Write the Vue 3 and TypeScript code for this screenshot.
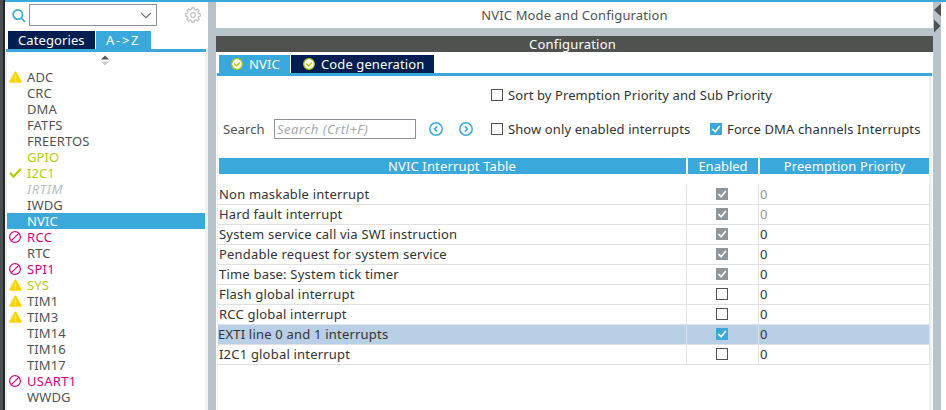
<script setup lang="ts">
type Status = 'warn' | 'ok' | 'blocked' | ''
interface Peripheral {
  name: string
  status: Status
  tone: '' | 'green' | 'pink' | 'muted' | 'selected'
}
interface Interrupt {
  name: string
  enabled: boolean
  locked: boolean
  fixedPriority: boolean
  selected?: boolean
}

const peripherals: Peripheral[] = [
  { name: 'ADC', status: 'warn', tone: '' },
  { name: 'CRC', status: '', tone: '' },
  { name: 'DMA', status: '', tone: '' },
  { name: 'FATFS', status: '', tone: '' },
  { name: 'FREERTOS', status: '', tone: '' },
  { name: 'GPIO', status: '', tone: 'green' },
  { name: 'I2C1', status: 'ok', tone: 'green' },
  { name: 'IRTIM', status: '', tone: 'muted' },
  { name: 'IWDG', status: '', tone: '' },
  { name: 'NVIC', status: '', tone: 'selected' },
  { name: 'RCC', status: 'blocked', tone: 'pink' },
  { name: 'RTC', status: '', tone: '' },
  { name: 'SPI1', status: 'blocked', tone: 'pink' },
  { name: 'SYS', status: 'warn', tone: 'green' },
  { name: 'TIM1', status: 'warn', tone: '' },
  { name: 'TIM3', status: 'warn', tone: '' },
  { name: 'TIM14', status: '', tone: '' },
  { name: 'TIM16', status: '', tone: '' },
  { name: 'TIM17', status: '', tone: '' },
  { name: 'USART1', status: 'blocked', tone: 'pink' },
  { name: 'WWDG', status: '', tone: '' },
]

const interrupts: Interrupt[] = [
  { name: 'Non maskable interrupt', enabled: true, locked: true, fixedPriority: true },
  { name: 'Hard fault interrupt', enabled: true, locked: true, fixedPriority: true },
  { name: 'System service call via SWI instruction', enabled: true, locked: true, fixedPriority: false },
  { name: 'Pendable request for system service', enabled: true, locked: true, fixedPriority: false },
  { name: 'Time base: System tick timer', enabled: true, locked: true, fixedPriority: false },
  { name: 'Flash global interrupt', enabled: false, locked: false, fixedPriority: false },
  { name: 'RCC global interrupt', enabled: false, locked: false, fixedPriority: false },
  { name: 'EXTI line 0 and 1 interrupts', enabled: true, locked: false, fixedPriority: false, selected: true },
  { name: 'I2C1 global interrupt', enabled: false, locked: false, fixedPriority: false },
]
</script>

<template>
  <div class="window">
    <div class="frame-edge"></div>
    <div class="workspace">
      <aside class="sidebar">
        <div class="finder">
          <svg class="magnifier" viewBox="0 0 14 14">
            <circle cx="5.8" cy="5.6" r="4.7" />
            <path d="M9.2 9 L13 12.9" />
          </svg>
          <div class="combo">
            <svg class="chevron" viewBox="0 0 12 7"><path d="M1 1 L6 5.6 L11 1" /></svg>
          </div>
          <svg class="gear" viewBox="-8 -8 16 16">
            <path
              d="M-1.1 -7.3 H1.1 L1.5 -5.5 L3 -4.9 L4.5 -6 L6 -4.5 L4.9 -3 L5.5 -1.5 L7.3 -1.1 V1.1 L5.5 1.5 L4.9 3 L6 4.5 L4.5 6 L3 4.9 L1.5 5.5 L1.1 7.3 H-1.1 L-1.5 5.5 L-3 4.9 L-4.5 6 L-6 4.5 L-4.9 3 L-5.5 1.5 L-7.3 1.1 V-1.1 L-5.5 -1.5 L-4.9 -3 L-6 -4.5 L-4.5 -6 L-3 -4.9 L-1.5 -5.5 Z"
            />
            <circle r="2.4" />
          </svg>
        </div>
        <div class="side-tabs">
          <div class="tab dark categories">Categories</div>
          <div class="tab az">A-&gt;Z</div>
        </div>
        <div class="side-rule"></div>
        <div class="side-body">
          <div class="sorter">
            <svg viewBox="0 0 8 11">
              <path class="up" d="M0 4.6 L4 0.6 L8 4.6 Z" />
              <path class="down" d="M0 6.4 L4 10.4 L8 6.4 Z" />
            </svg>
          </div>
          <ul class="list">
            <li v-for="p in peripherals" :key="p.name" :class="p.tone">
              <span class="mark">
                <svg v-if="p.status === 'warn'" viewBox="0 0 13 12">
                  <path class="warn" d="M6.5 1.2 L12.1 10.9 H0.9 Z" />
                  <path class="bang" d="M6.5 4.4 V8 M6.5 8.9 V10" />
                </svg>
                <svg v-else-if="p.status === 'ok'" viewBox="0 0 13 12">
                  <path class="tick" d="M1 5.9 L4.6 9.5 L11.8 1.8" />
                </svg>
                <svg v-else-if="p.status === 'blocked'" viewBox="0 0 13 12">
                  <circle class="ban" cx="6" cy="6" r="5.4" />
                  <path class="ban" d="M2.4 9.6 L9.7 2.4" />
                </svg>
              </span>
              <span class="pname">{{ p.name }}</span>
            </li>
          </ul>
        </div>
      </aside>

      <main class="main">
        <div class="mode-title">NVIC Mode and Configuration</div>
        <div class="config-title">Configuration</div>
        <section class="config">
          <div class="tabs">
            <div class="tab nvic">
              <svg class="badge" viewBox="0 0 12 12">
                <circle cx="6" cy="6" r="5.3" />
                <path d="M3.3 5.6 L5.5 7.9 L8.9 4.4" />
              </svg>
              <span>NVIC</span>
            </div>
            <div class="tab dark codegen">
              <svg class="badge" viewBox="0 0 12 12">
                <circle cx="6" cy="6" r="5.3" />
                <path d="M3.3 5.6 L5.5 7.9 L8.9 4.4" />
              </svg>
              <span>Code generation</span>
            </div>
          </div>
          <div class="rule"></div>
          <div class="pane">
            <div class="options">
              <div class="search-label">Search</div>
              <div class="search-box">Search (Crtl+F)</div>
              <svg class="nav prev" viewBox="0 0 14 14">
                <circle cx="7" cy="7" r="6.2" />
                <path d="M8.2 4.4 L5.5 7 L8.2 9.6" />
              </svg>
              <svg class="nav next" viewBox="0 0 14 14">
                <circle cx="7" cy="7" r="6.2" />
                <path d="M5.8 4.4 L8.5 7 L5.8 9.6" />
              </svg>
              <div class="option sort">
                <span class="box"></span><span>Sort by Premption Priority and Sub Priority</span>
              </div>
              <div class="option only">
                <span class="box"></span><span>Show only enabled interrupts</span>
              </div>
              <div class="option force">
                <span class="box on"><svg viewBox="0 0 12 12"><path d="M2.3 6 L5.2 8.8 L9.8 2.9" /></svg></span>
                <span>Force DMA channels Interrupts</span>
              </div>
            </div>
            <div class="thead">
              <div class="th-name">NVIC Interrupt Table</div>
              <div class="th-enabled">Enabled</div>
              <div>Preemption Priority</div>
            </div>
            <div class="tbody">
              <div v-for="i in interrupts" :key="i.name" class="row" :class="{ picked: i.selected }">
                <div class="cell name">{{ i.name }}</div>
                <div class="cell enabled">
                  <span class="box" :class="{ on: i.enabled, locked: i.locked }">
                    <svg v-if="i.enabled" viewBox="0 0 12 12"><path d="M2.3 6 L5.2 8.8 L9.8 2.9" /></svg>
                  </span>
                </div>
                <div class="cell prio" :class="{ fixed: i.fixedPriority }">0</div>
              </div>
            </div>
          </div>
        </section>
      </main>

      <div class="splitter">
        <svg viewBox="0 0 8 32">
          <path d="M8 1.5 V14.5 L1 8 Z" />
          <path d="M1 17.5 V30.5 L7.5 24 Z" />
        </svg>
      </div>
    </div>
  </div>
</template>

<style>
body {
  background: #fff;
  overflow: hidden;
}
</style>

<style scoped>
* {
  box-sizing: border-box;
}
svg {
  display: block;
  fill: none;
}
.window {
  display: flex;
  width: 946px;
  height: 410px;
  overflow: hidden;
  font-family: 'Noto Sans', 'Open Sans', sans-serif;
  font-size: 13px;
  line-height: 16px;
  letter-spacing: 0.1px;
  color: #333;
  white-space: nowrap;
}
.frame-edge {
  width: 5px;
  background: #4b5052;
  border-right: 2px solid #242526;
}
.workspace {
  flex: 1;
  display: flex;
  border-top: 2px solid #3ba8db;
  padding-right: 5px;
}
.sidebar {
  width: 203px;
  display: flex;
  flex-direction: column;
}
.finder {
  display: flex;
  height: 29px;
  padding: 2px 7px 0;
}
.magnifier {
  width: 14px;
  height: 14px;
  margin: 5px 3px 0 0;
  stroke: #3ba8db;
  stroke-width: 1.7;
}
.combo {
  width: 128px;
  height: 22px;
  border: 1px solid #8c9296;
  display: flex;
  justify-content: flex-end;
  padding: 7px 4px 0 0;
}
.chevron {
  width: 12px;
  height: 7px;
  stroke: #6c7275;
  stroke-width: 1.2;
}
.gear {
  width: 16px;
  height: 16px;
  margin: 3px 0 0 28px;
  stroke: #c5c8ca;
  stroke-width: 1.4;
}
.side-tabs,
.tabs {
  display: flex;
  gap: 1px;
  height: 18px;
}
.side-tabs {
  padding-left: 3px;
}
.tab {
  display: flex;
  align-items: center;
  height: 18px;
  background: #3ba8db;
  color: #fff;
}
.tab.dark {
  background: #001f50;
}
.side-tabs .tab {
  padding-bottom: 1px;
}
.categories {
  width: 87px;
  padding-left: 10px;
}
.az {
  width: 55px;
  padding-left: 10px;
  letter-spacing: 1.7px;
}
.side-rule {
  height: 3px;
  margin: 0 2px 0 1px;
  background: #3ba8db;
}
.side-body {
  flex: 1;
  border-left: 2px solid #f0f2f2;
  border-right: 3px solid #f0f2f2;
}
.sorter {
  height: 17px;
  padding: 3px 0 0 94px;
}
.sorter svg {
  width: 8px;
  height: 11px;
}
.up {
  fill: #555;
}
.down {
  fill: #c8cbcd;
}
.list {
  margin: 0;
  padding: 0;
  list-style: none;
}
.list li {
  display: flex;
  height: 16px;
  color: #505354;
  letter-spacing: 0.1px;
}
.list .green {
  color: #b4cc0a;
}
.list .pink {
  color: #d6007f;
  letter-spacing: 0.3px;
}
.list .muted {
  color: #b5c0c7;
  font-style: italic;
  letter-spacing: 0.5px;
}
.list .selected {
  background: #3ba8db;
  color: #fff;
}
.mark {
  width: 20px;
  padding: 2px 0 0 2px;
}
.mark svg {
  width: 13px;
  height: 12px;
}
.warn {
  fill: #ffd200;
  stroke: #ffd200;
  stroke-width: 1.6;
  stroke-linejoin: round;
}
.bang {
  stroke: #fff;
  stroke-width: 1.2;
}
.tick {
  stroke: #b4cc0a;
  stroke-width: 2.3;
}
.ban {
  stroke: #d6007f;
  stroke-width: 1.2;
}
.main {
  width: 733px;
  border-left: 8px solid #b9c4ca;
  border-right: 8px solid #b9c4ca;
  margin-right: -8px;
  display: flex;
  flex-direction: column;
}
.mode-title {
  height: 34px;
  border-bottom: 8px solid #b9c4ca;
  padding-top: 5px;
  text-align: center;
  color: #505354;
  letter-spacing: 0.12px;
}
.config-title {
  height: 16px;
  background: #50524f;
  color: #fff;
  text-align: center;
  padding-right: 4px;
  letter-spacing: 0.2px;
}
.config {
  flex: 1;
  padding: 3px 1px 0;
  display: flex;
  flex-direction: column;
}
.tabs {
  padding-left: 2px;
}
.tabs .tab {
  padding-bottom: 1px;
}
.tab .badge {
  width: 12px;
  height: 12px;
  margin-right: 6px;
}
.badge circle {
  fill: #fff;
  stroke: #b4cc0a;
  stroke-width: 1.3;
}
.badge path {
  stroke: #b4cc0a;
  stroke-width: 1.5;
}
.nvic {
  width: 71px;
  padding-left: 12px;
}
.codegen {
  width: 143px;
  padding-left: 12px;
}
.rule {
  height: 3px;
  background: #3ba8db;
}
.pane {
  flex: 1;
  border-left: 1px solid #f0f2f2;
  border-right: 3px solid #f0f2f2;
}
.options {
  display: grid;
  grid-template-columns: 51px 142px 12px 30px 39px 219px 1fr;
  grid-template-rows: 38px 30px;
  align-items: center;
  height: 82px;
  padding: 0 0 14px 5px;
}
.search-label {
  grid-area: 2 / 1;
  color: #505354;
}
.search-box {
  grid-area: 2 / 2;
  height: 20px;
  border: 1px solid #8c9296;
  padding: 1px 0 0 2px;
  color: #a4a8aa;
  font-style: italic;
  letter-spacing: 0.5px;
}
.nav {
  width: 14px;
  height: 14px;
  stroke: #3ba8db;
  stroke-width: 1.5;
}
.prev {
  grid-area: 2 / 4;
  margin-left: 1px;
}
.next {
  grid-area: 2 / 5;
  margin-left: 1px;
}
.option {
  display: flex;
  align-items: center;
  gap: 5px;
}
.sort {
  grid-area: 1 / 6 / 2 / 8;
  margin-left: -6px;
}
.only {
  grid-area: 2 / 6;
  margin-left: -6px;
}
.force {
  grid-area: 2 / 7;
  margin-left: -6px;
  letter-spacing: 0.13px;
}
.box {
  flex: none;
  width: 12px;
  height: 12px;
  border: 1px solid #505354;
  background: #fff;
}
.box.on {
  border: 0;
  background: #3ba8db;
}
.box.locked {
  background: #8f979c;
}
.box svg {
  width: 12px;
  height: 12px;
  stroke: #fff;
  stroke-width: 1.6;
}
.thead {
  display: grid;
  grid-template-columns: 467px 70px 169px;
  gap: 2px;
  height: 16px;
  padding-left: 1px;
  color: #fff;
  text-align: center;
}
.thead div {
  background: #3ba8db;
}
.thead .th-name {
  padding-right: 1px;
  letter-spacing: 0.15px;
}
.thead .th-enabled {
  letter-spacing: 0;
}
.tbody {
  margin-top: 11px;
  width: 712px;
}
.row {
  display: grid;
  grid-template-columns: 469px 72px 171px;
  height: 20px;
}
.cell {
  border-right: 1px solid #dfe2e4;
  border-bottom: 1px solid #dfe2e4;
}
.name {
  padding: 1px 0 0 1px;
  letter-spacing: 0.2px;
}
.enabled {
  padding: 3px 0 0 29px;
}
.enabled .box {
  display: block;
}
.prio {
  padding: 1px 0 0 1px;
}
.fixed {
  color: #8f979c;
}
.picked .cell {
  background: #b9cfe6;
}
.picked .name {
  padding-left: 0;
}
.splitter {
  width: 8px;
}
.splitter svg {
  width: 8px;
  height: 32px;
}
.splitter path {
  fill: #505354;
}
</style>
